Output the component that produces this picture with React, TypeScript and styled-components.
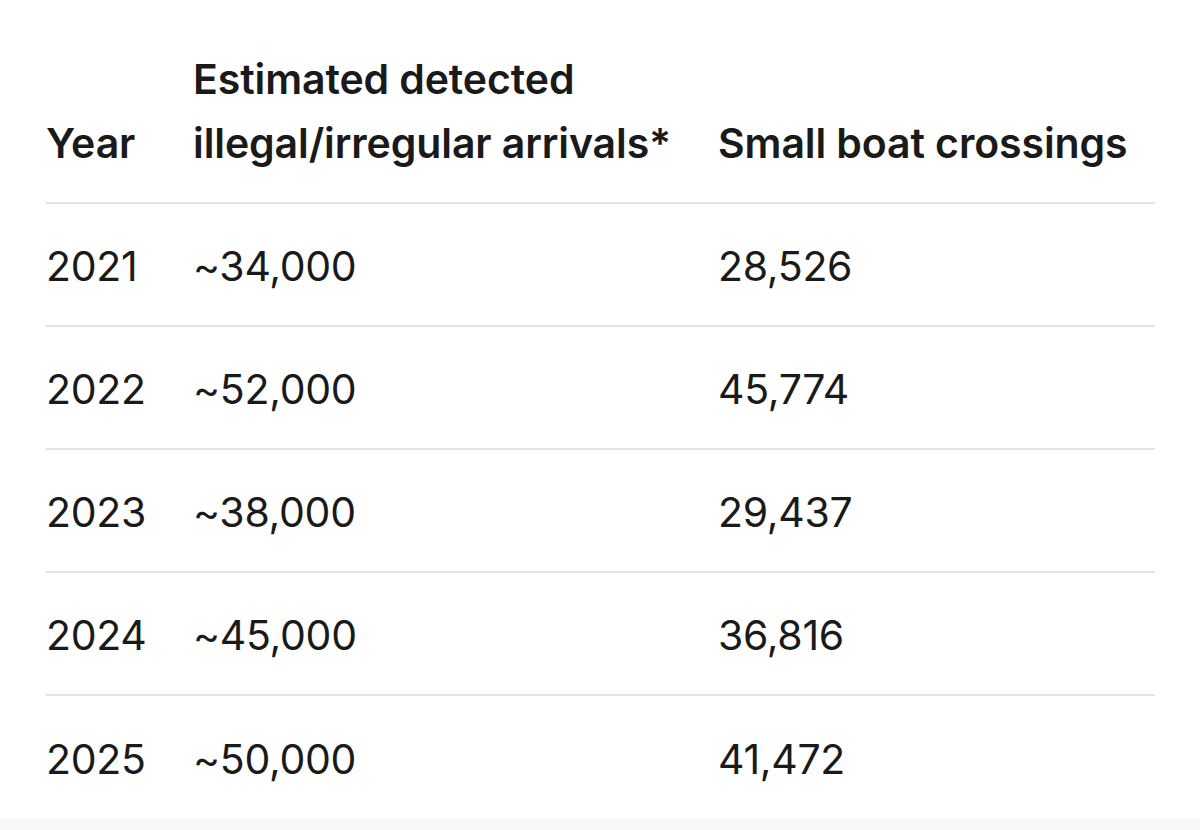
import * as React from 'react'
import styled, { createGlobalStyle } from 'styled-components'

const GlobalStyle = createGlobalStyle`
  html, body {
    margin: 0;
    padding: 0;
    background: #ffffff;
  }
  body {
    font-family: Inter, "Noto Sans", "Liberation Sans", sans-serif;
    color: #1a1a1a;
    -webkit-font-smoothing: antialiased;
  }
`

const Page = styled.div`
  width: 1200px;
  height: 830px;
  display: flex;
  flex-direction: column;
  overflow: hidden;
`

const Table = styled.div`
  flex: 1;
  margin: 0 45px 0 46px;
  display: grid;
  grid-template-columns: 147px 525px 1fr;
  align-content: start;
`

const HeadCell = styled.div`
  font-size: 41px;
  font-weight: 600;
  line-height: 64px;
  letter-spacing: -0.1px;
  display: flex;
  align-items: flex-end;
  padding: 47px 0 27px;
  border-bottom: 2px solid #e3e3e3;
`

const Cell = styled.div<{ $last?: boolean }>`
  font-size: 41px;
  font-weight: 400;
  height: 123px;
  display: flex;
  align-items: center;
  padding-top: 2px;
  box-sizing: border-box;
  border-bottom: ${(p) => (p.$last ? 'none' : '2px solid #e3e3e3')};
  letter-spacing: -0.3px;
`

const Footer = styled.div`
  height: 14px;
  background: #f7f7f7;
`

const rows = [
  ['2021', '~34,000', '28,526'],
  ['2022', '~52,000', '45,774'],
  ['2023', '~38,000', '29,437'],
  ['2024', '~45,000', '36,816'],
  ['2025', '~50,000', '41,472'],
]

export default function App() {
  return (
    <Page>
      <GlobalStyle />
      <Table>
        <HeadCell>Year</HeadCell>
        <HeadCell>
          Estimated detected
          <br />
          illegal/irregular arrivals*
        </HeadCell>
        <HeadCell>Small boat crossings</HeadCell>
        {rows.map((r, i) =>
          r.map((v, j) => (
            <Cell key={`${i}-${j}`} $last={i === rows.length - 1}>
              {v}
            </Cell>
          ))
        )}
      </Table>
      <Footer />
    </Page>
  )
}
